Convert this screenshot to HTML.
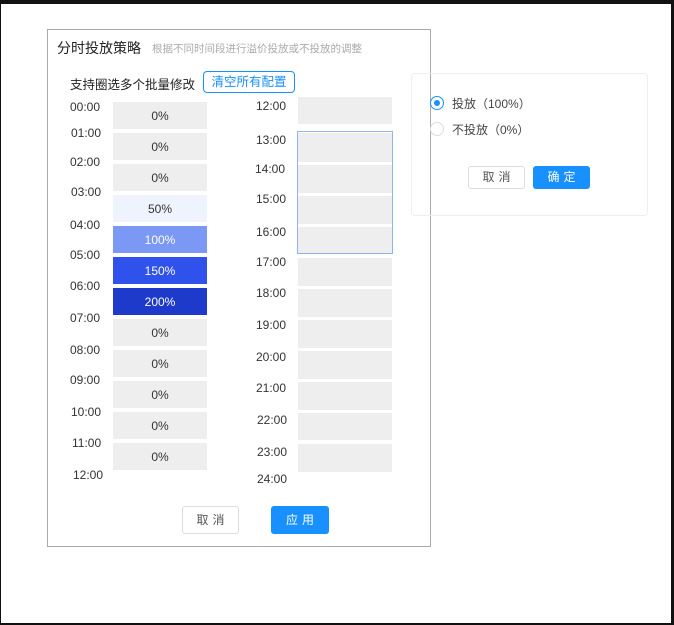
<!DOCTYPE html><html><head><meta charset="utf-8"><style>
*{margin:0;padding:0;box-sizing:border-box}
body{width:674px;height:625px;background:#fff;position:relative;overflow:hidden;font-family:"Liberation Sans","Noto Sans CJK SC",sans-serif;color:#333}
.a{position:absolute}
.c{position:absolute;background:#eee;font-size:12px;text-align:center;color:#333;line-height:28px!important}
.t{position:absolute;font-size:12px;color:#333;margin-top:1px}
.btn{position:absolute;font-size:12px;text-align:center;border-radius:3px;letter-spacing:4px}
</style></head><body>
<div class="a" style="left:0;top:0;width:674px;height:4px;background:#111"></div>
<div class="a" style="left:671px;top:0;width:3px;height:625px;background:#111"></div>
<div class="a" style="left:0;top:0;width:1px;height:625px;background:#111"></div>
<div class="a" style="left:0;top:623px;width:674px;height:2px;background:#111"></div>

<div class="a" style="left:47px;top:29px;width:384px;height:518px;border:1px solid #aaa"></div>
<div class="a" style="left:57px;top:38px;font-size:14px;color:#222">分时投放策略</div>
<div class="a" style="left:152px;top:41px;font-size:10.5px;color:#aaa">根据不同时间段进行溢价投放或不投放的调整</div>
<div class="a" style="left:70px;top:74px;font-size:12.5px;color:#222">支持圈选多个批量修改</div>
<div class="a" style="left:203px;top:71px;width:92px;height:22px;border:1px solid #1890ff;border-radius:4px;color:#1890ff;font-size:12.5px;text-align:center;line-height:20px">清空所有配置</div>

<div class="c" style="left:113px;top:102px;width:94px;height:27px">0%</div>
<div class="c" style="left:113px;top:133px;width:94px;height:27px">0%</div>
<div class="c" style="left:113px;top:164px;width:94px;height:27px">0%</div>
<div class="c" style="left:113px;top:195px;width:94px;height:27px;background:#eef3fe">50%</div>
<div class="c" style="left:113px;top:226px;width:94px;height:27px;background:#7b98f5;color:#fff">100%</div>
<div class="c" style="left:113px;top:257px;width:94px;height:27px;background:#3052ec;color:#fff">150%</div>
<div class="c" style="left:113px;top:288px;width:94px;height:27px;background:#1d3acb;color:#fff">200%</div>
<div class="c" style="left:113px;top:319px;width:94px;height:27px">0%</div>
<div class="c" style="left:113px;top:350px;width:94px;height:27px">0%</div>
<div class="c" style="left:113px;top:381px;width:94px;height:27px">0%</div>
<div class="c" style="left:113px;top:412px;width:94px;height:27px">0%</div>
<div class="c" style="left:113px;top:443px;width:94px;height:27px">0%</div>

<div class="t" style="left:70px;top:99px">00:00</div>
<div class="t" style="left:71px;top:125px">01:00</div>
<div class="t" style="left:70px;top:154px">02:00</div>
<div class="t" style="left:71px;top:184px">03:00</div>
<div class="t" style="left:70px;top:217px">04:00</div>
<div class="t" style="left:70px;top:247px">05:00</div>
<div class="t" style="left:70px;top:278px">06:00</div>
<div class="t" style="left:70px;top:310px">07:00</div>
<div class="t" style="left:70px;top:342px">08:00</div>
<div class="t" style="left:70px;top:372px">09:00</div>
<div class="t" style="left:71px;top:404px">10:00</div>
<div class="t" style="left:72px;top:435px">11:00</div>
<div class="t" style="left:73px;top:467px">12:00</div>

<div class="c" style="left:298px;top:97px;width:94px;height:27px"></div>
<div class="c" style="left:298px;top:133px;width:94px;height:29px"></div>
<div class="c" style="left:298px;top:165px;width:94px;height:28px"></div>
<div class="c" style="left:298px;top:196px;width:94px;height:28px"></div>
<div class="c" style="left:298px;top:227px;width:94px;height:26px"></div>
<div class="c" style="left:298px;top:258px;width:94px;height:28px"></div>
<div class="c" style="left:298px;top:289px;width:94px;height:28px"></div>
<div class="c" style="left:298px;top:320px;width:94px;height:28px"></div>
<div class="c" style="left:298px;top:351px;width:94px;height:28px"></div>
<div class="c" style="left:298px;top:382px;width:94px;height:28px"></div>
<div class="c" style="left:298px;top:413px;width:94px;height:27px"></div>
<div class="c" style="left:298px;top:444px;width:94px;height:28px"></div>
<div class="a" style="left:297px;top:131px;width:96px;height:123px;border:1px solid #8fb4f2"></div>

<div class="t" style="left:256px;top:98px">12:00</div>
<div class="t" style="left:256px;top:132px">13:00</div>
<div class="t" style="left:255px;top:161px">14:00</div>
<div class="t" style="left:256px;top:191px">15:00</div>
<div class="t" style="left:256px;top:224px">16:00</div>
<div class="t" style="left:256px;top:254px">17:00</div>
<div class="t" style="left:256px;top:285px">18:00</div>
<div class="t" style="left:256px;top:317px">19:00</div>
<div class="t" style="left:256px;top:349px">20:00</div>
<div class="t" style="left:256px;top:380px">21:00</div>
<div class="t" style="left:257px;top:412px">22:00</div>
<div class="t" style="left:257px;top:444px">23:00</div>
<div class="t" style="left:257px;top:471px">24:00</div>

<div class="btn" style="left:182px;top:506px;width:57px;height:28px;border:1px solid #ddd;line-height:26px;color:#555;padding-left:4px">取消</div>
<div class="btn" style="left:271px;top:506px;width:58px;height:28px;background:#1890ff;line-height:28px;color:#fff;padding-left:4px">应用</div>

<div class="a" style="left:411px;top:73px;width:237px;height:143px;border:1px solid #eee;border-radius:4px"></div>
<div class="a" style="left:430px;top:96px;width:14px;height:14px;border:1px solid #1890ff;border-radius:50%"></div>
<div class="a" style="left:434px;top:100px;width:6px;height:6px;background:#1890ff;border-radius:50%"></div>
<div class="a" style="left:430px;top:122px;width:14px;height:14px;border:1px solid #ddd;border-radius:50%"></div>
<div class="a" style="left:452px;top:95px;font-size:12px;color:#444">投放（100%）</div>
<div class="a" style="left:452px;top:121px;font-size:12px;color:#444">不投放（0%）</div>
<div class="btn" style="left:468px;top:166px;width:57px;height:23px;border:1px solid #ddd;line-height:21px;color:#555;padding-left:4px">取消</div>
<div class="btn" style="left:533px;top:166px;width:57px;height:23px;background:#1890ff;line-height:23px;color:#fff;padding-left:4px">确定</div>
</body></html>
